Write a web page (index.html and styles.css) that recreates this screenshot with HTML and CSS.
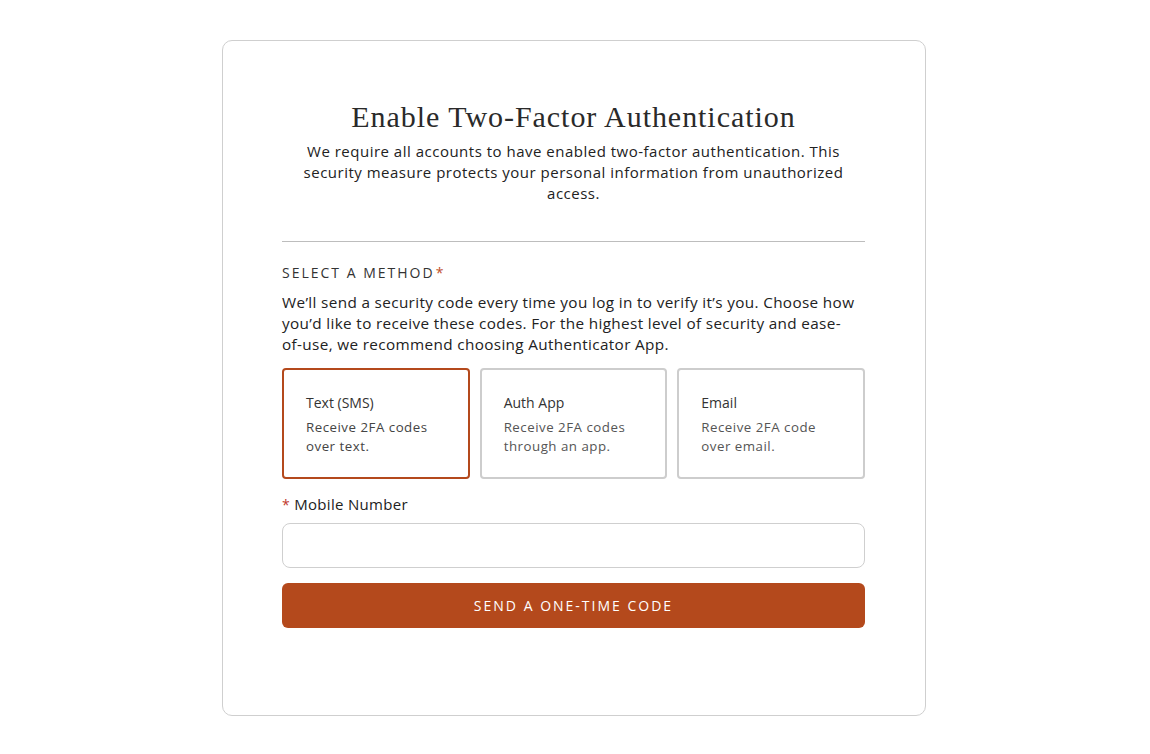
FILE: index.html
```html
<!DOCTYPE html>
<html lang="en">
<head>
<meta charset="utf-8">
<title>Enable Two-Factor Authentication</title>
<link rel="stylesheet" href="styles.css">
</head>
<body>
<main class="page">
  <section class="card">
    <header class="intro">
      <h1 class="title">Enable Two-Factor Authentication</h1>
      <p class="lead">We require all accounts to have enabled two-factor authentication. This security measure protects your personal information from unauthorized access.</p>
    </header>
    <hr class="divider">
    <div class="section-label">SELECT A METHOD<span class="req">*</span></div>
    <p class="desc">We’ll send a security code every time you log in to verify it’s you. Choose how you’d like to receive these codes. For the highest level of security and ease-<span class="nowrap">of-use,</span> we recommend choosing Authenticator App.</p>
    <div class="methods">
      <div class="method selected">
        <div class="method-title">Text (SMS)</div>
        <div class="method-text">Receive 2FA codes over text.</div>
      </div>
      <div class="method">
        <div class="method-title">Auth App</div>
        <div class="method-text">Receive 2FA codes through an app.</div>
      </div>
      <div class="method">
        <div class="method-title">Email</div>
        <div class="method-text">Receive 2FA code over email.</div>
      </div>
    </div>
    <label class="field-label"><span class="req-field">*</span> Mobile Number</label>
    <div class="input"></div>
    <button class="send">SEND A ONE-TIME CODE</button>
  </section>
</main>
</body>
</html>
```

FILE: styles.css
```css
* { box-sizing: border-box; }
html, body { margin: 0; padding: 0; background: #fff; }
body {
  font-family: "Open Sans", "Liberation Sans", sans-serif;
  color: #222;
}
.page {
  display: flex;
  justify-content: center;
  padding-top: 40px;
}
.card {
  width: 704px;
  height: 676px;
  margin-left: -2px;
  border: 1px solid #cfcfcf;
  border-radius: 10px;
  padding: 56px 60px 0 59px;
  display: flex;
  flex-direction: column;
}
.intro { text-align: center; }
.title {
  font-family: "Liberation Serif", "DejaVu Serif", serif;
  font-weight: 400;
  font-size: 30px;
  color: #2a2a2a;
  margin: 0;
  line-height: 40px;
  letter-spacing: 0.95px;
}
.lead {
  margin: 4px auto 0;
  width: 560px;
  font-size: 15px;
  line-height: 21px;
  letter-spacing: 0.5px;
  color: #222;
}
.divider {
  border: 0;
  border-top: 1px solid #bdbdbd;
  margin: 37px 0 0;
}
.section-label {
  margin-top: 22px;
  font-size: 14px;
  letter-spacing: 2px;
  color: #333;
  line-height: 18px;
}
.req { color: #c0502a; letter-spacing: 0; margin-left: 1px; }
.desc {
  margin: 10px 0 0;
  font-size: 15.3px;
  line-height: 21px;
  letter-spacing: 0.35px;
  color: #222;
}
.nowrap { white-space: nowrap; }
.methods {
  margin-top: 13px;
  display: grid;
  grid-template-columns: repeat(3, 1fr);
  gap: 10px;
}
.method {
  height: 111px;
  border: 2px solid #cdcdcd;
  border-radius: 4px;
  padding: 24px 22px 0 22px;
}
.method.selected { border-color: #b4491c; }
.method-title {
  font-size: 14px;
  line-height: 18px;
  color: #333;
}
.method-text {
  margin-top: 6px;
  font-size: 13.3px;
  line-height: 19px;
  letter-spacing: 0.5px;
  color: #444;
}
.method:not(.selected) .method-text { color: #555; }
.field-label {
  margin-top: 15px;
  font-size: 15px;
  line-height: 20px;
  letter-spacing: 0.3px;
  color: #222;
}
.req-field { color: #c0392b; font-size: 14px; }
.input {
  margin-top: 8px;
  height: 45px;
  border: 1px solid #cfcfcf;
  border-radius: 8px;
}
.send {
  margin-top: 15px;
  height: 45px;
  border: 0;
  border-radius: 6px;
  background: #b4491c;
  color: #fff;
  font-family: "Open Sans", "Liberation Sans", sans-serif;
  font-size: 14px;
  letter-spacing: 2px;
}
```
